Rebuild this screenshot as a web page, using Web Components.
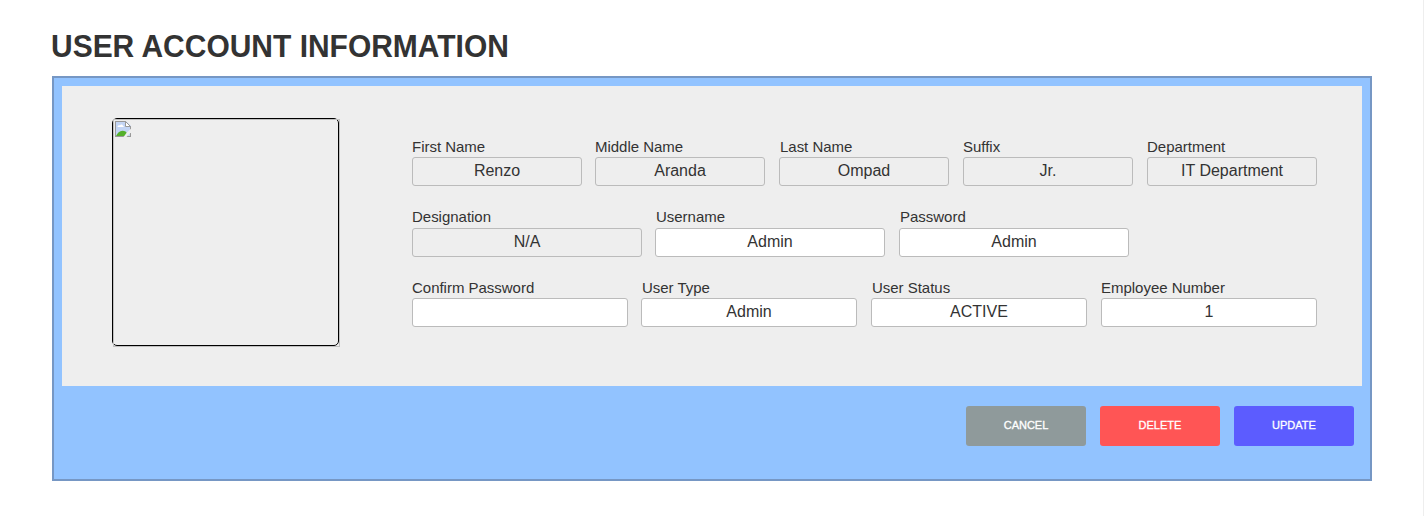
<!DOCTYPE html>
<html lang="en">
<head>
<meta charset="utf-8">
<title>User Account Information</title>
<style>
html,body{margin:0;height:100%;background:#fff;overflow:hidden}
body{font-family:"Liberation Sans",Arial,sans-serif;color:#333}
</style>
</head>
<body>
<account-page>
  <span slot="title">USER ACCOUNT INFORMATION</span>
  <account-photo slot="photo"></account-photo>
  <field-row>
    <form-field label="First Name" readonly>Renzo</form-field>
    <form-field label="Middle Name" readonly>Aranda</form-field>
    <form-field label="Last Name" readonly style="--indent:1px">Ompad</form-field>
    <form-field label="Suffix" readonly>Jr.</form-field>
    <form-field label="Department" readonly>IT Department</form-field>
  </field-row>
  <field-row style="--field:230px;--label-height:20px">
    <form-field label="Designation" readonly>N/A</form-field>
    <form-field label="Username" style="--indent:1px">Admin</form-field>
    <form-field label="Password" style="--indent:1px">Admin</form-field>
  </field-row>
  <field-row style="--field:216px">
    <form-field label="Confirm Password"></form-field>
    <form-field label="User Type" style="--indent:1px">Admin</form-field>
    <form-field label="User Status" style="--indent:1px">ACTIVE</form-field>
    <form-field label="Employee Number">1</form-field>
  </field-row>
  <action-button slot="actions" style="--bg:#8f9a9b">CANCEL</action-button>
  <action-button slot="actions" style="--bg:#ff5555">DELETE</action-button>
  <action-button slot="actions" style="--bg:#5c5cff">UPDATE</action-button>
</account-page>
<script>
const define = (name, html, setup) => customElements.define(name, class extends HTMLElement {
  constructor() {
    super();
    this.attachShadow({ mode: "open" }).innerHTML = html;
  }
  connectedCallback() { if (setup) setup(this); }
});

define("account-page", `
<style>
:host{display:block;box-sizing:border-box;height:100vh;padding:30px 51px 0 52px;border-right:1px solid #eee}
h1{margin:0 0 12px -1px;font-size:30px;line-height:34px;font-weight:700;color:#333;white-space:nowrap;width:max-content;transform:scale(.999,1.06);transform-origin:0 27px}
.card{box-sizing:border-box;width:1320px;height:405px;border:2px solid #7697c4;padding:8px;background:#92c3ff}
.panel{box-sizing:border-box;height:300px;background:#eee;display:flex;padding:32px 45px 0 50px;justify-content:space-between}
.fields{width:905px;padding-top:20px;display:flex;flex-direction:column;gap:22px}
.actions{display:flex;justify-content:flex-end;gap:14px;padding:20px 8px 0 0}
</style>
<h1><slot name="title"></slot></h1>
<section class="card">
  <div class="panel"><slot name="photo"></slot><div class="fields"><slot></slot></div></div>
  <div class="actions"><slot name="actions"></slot></div>
</section>`);

define("account-photo", `
<style>
:host{display:block;position:relative;z-index:0;box-sizing:border-box;width:227px;height:228px;border:1px solid #000;border-radius:5px;padding:2px}
.edge{position:absolute;left:0;top:0;box-sizing:border-box;width:227px;height:228px;border:1px solid #c0c0c0;z-index:-1}
svg{display:block}
</style>
<div class="edge"></div>
<svg width="16" height="16" viewBox="0 0 16 16">
  <path d="M0 0H11L16 5V16H0Z" fill="#c3d5f5"/>
  <path d="M2.5 6C2.5 4.5 4 4 5 4.4C5.5 3 7.7 3.2 7.9 4.8C9 5 9 6 8.5 6Z" fill="#fff"/>
  <path d="M1 15C2.5 12 4.5 9.7 7.5 9.7C9.8 9.7 11.5 11 12.5 12.5V15Z" fill="#55b02c"/>
  <path d="M.5 0V16M0 .5H11M0 15.5H16M15.5 5V16" fill="none" stroke="#999"/>
  <path d="M10.5 .5V5.5H15.5Z" fill="#fff" stroke="#999"/>
  <path d="M8.5 16L12 11.2L16 7.8V11.2L11.5 16Z" fill="#eee"/>
</svg>`);

define("field-row", `
<style>
:host{display:flex;column-gap:14px}
::slotted(:first-child){margin-right:-1px}
</style><slot></slot>`);

define("form-field", `
<style>
:host{display:block;width:var(--field,170px);flex:none}
.label{display:block;font-size:15px;line-height:17px;height:var(--label-height,19px);padding-left:var(--indent,0);white-space:nowrap;letter-spacing:-.02px}
.value{box-sizing:border-box;height:29px;border:1px solid #bbb;border-radius:3px;background:#fff;text-align:center;font-size:16px;line-height:26px;white-space:nowrap}
:host([readonly]) .value{background:#eee}
</style>
<span class="label"></span><div class="value"><slot></slot></div>`,
  el => { el.shadowRoot.querySelector(".label").textContent = el.getAttribute("label"); });

define("action-button", `
<style>
:host{display:block}
button{display:block;width:120px;height:40px;margin:0;padding:0 0 2px;border:0;border-radius:3px;background:var(--bg);color:#fff;font:11px "Liberation Sans",Arial,sans-serif;-webkit-text-stroke:.3px #fff}
</style><button><slot></slot></button>`);
</script>
</body>
</html>
